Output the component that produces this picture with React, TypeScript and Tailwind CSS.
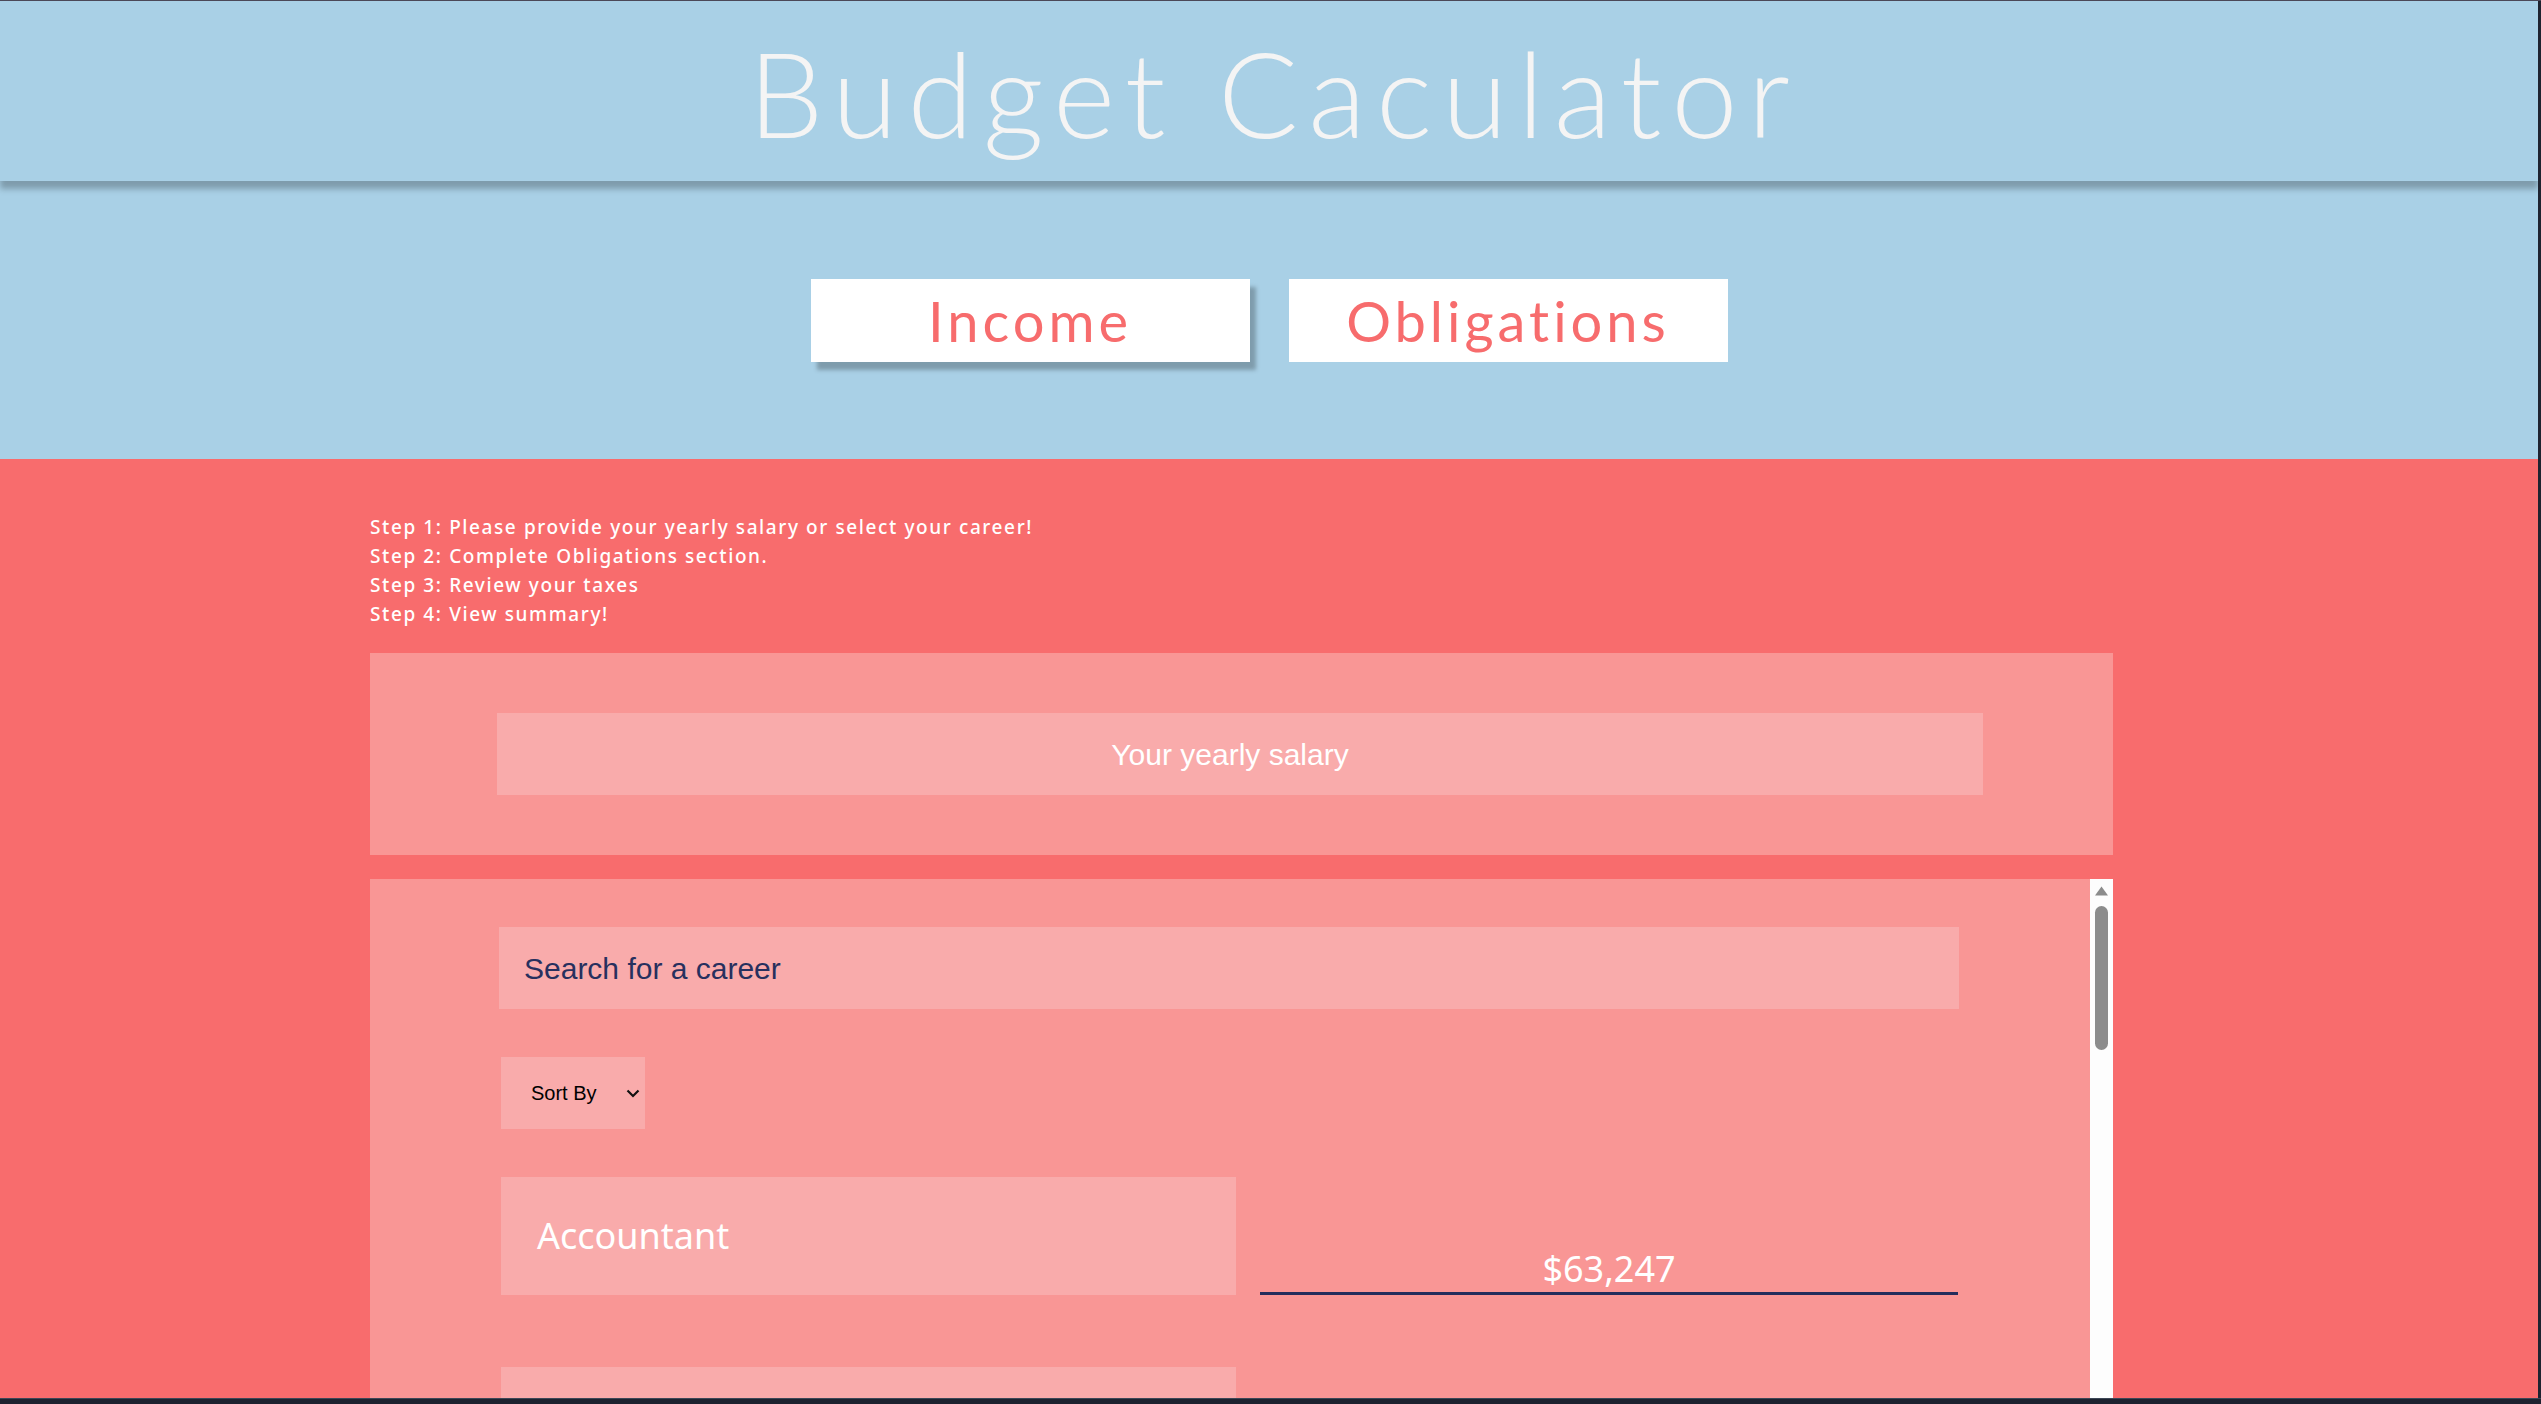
import React from 'react';

const careers = [
  { name: 'Accountant', salary: '$63,247' },
  { name: 'Actor', salary: '$39,140' },
  { name: 'Actuary', salary: '$102,880' },
];

const steps = [
  'Step 1: Please provide your yearly salary or select your career!',
  'Step 2: Complete Obligations section.',
  'Step 3: Review your taxes',
  'Step 4: View summary!',
];

const App: React.FC = () => {
  return (
    <div className="w-[2541px] h-[1404px] overflow-hidden flex flex-col bg-[#1e2330]">
      <div className="h-px shrink-0 bg-[#4b4858]" />
      <div className="flex flex-1 min-h-0">
        <main className="flex-1 min-w-0 overflow-hidden bg-[#f86c6d]">
          <header className="relative z-10 h-[180px] flex items-center justify-center bg-[#a9d0e6] shadow-[0_8px_6px_rgba(0,0,0,0.25)]">
            <h1 className="font-['Lato',sans-serif] font-light text-[119px] leading-none text-[#f4f4f4] tracking-[10px] pl-[10px] pt-[2px]">
              Budget Caculator
            </h1>
          </header>

          <section className="h-[278px] bg-[#a9d0e6] flex justify-center items-start gap-[39px] pt-[98px]">
            <button className="w-[439px] h-[83px] shrink-0 bg-white flex items-center justify-center font-['Lato',sans-serif] text-[56px] tracking-[4px] text-[#f76c6d] shadow-[6px_8px_4px_rgba(0,0,0,0.25)]">
              Income
            </button>
            <button className="w-[439px] h-[83px] shrink-0 bg-white flex items-center justify-center font-['Lato',sans-serif] text-[56px] tracking-[4px] text-[#f76c6d]">
              Obligations
            </button>
          </section>

          <section className="pl-[370px] pt-[54px]">
            <div className="font-['Noto_Sans',sans-serif] font-medium text-[19px] leading-[29px] text-white tracking-[1.6px]">
              {steps.map((s) => (
                <div key={s}>{s}</div>
              ))}
            </div>

            <div className="mt-[24px] w-[1743px] h-[202px] bg-[#f99695] flex items-center pl-[127px]">
              <div className="w-[1486px] h-[82px] bg-[#f9abab] flex items-center justify-center pr-[20px] font-['Liberation_Sans',Arial,sans-serif] text-[30px] text-white">
                Your yearly salary
              </div>
            </div>

            <div className="mt-[24px] w-[1743px] h-[560px] bg-[#f99695] flex">
              <div className="flex-1 pl-[129px] pt-[48px]">
                <div className="w-[1460px] h-[82px] bg-[#f9abab] flex items-center pl-[25px] font-['Liberation_Sans',Arial,sans-serif] text-[30px] text-[#28305e]">
                  Search for a career
                </div>

                <div className="mt-[48px] ml-[2px] w-[144px] h-[72px] bg-[#f9abab] flex items-center pl-[30px] pr-[5px] font-['Liberation_Sans',Arial,sans-serif] text-[20px] text-black">
                  <span>Sort By</span>
                  <svg className="ml-auto" width="14" height="9" viewBox="0 0 14 9" fill="none">
                    <path d="M1.5 1.5 L7 7 L12.5 1.5" stroke="#111" strokeWidth="2.2" />
                  </svg>
                </div>

                <div className="mt-[48px] ml-[2px] flex flex-col gap-[72px]">
                  {careers.map((c) => (
                    <div key={c.name} className="flex gap-[24px] shrink-0">
                      <div className="w-[735px] h-[118px] bg-[#f9abab] flex items-center pl-[36px] font-['Noto_Sans',sans-serif] text-[36px] text-white">
                        {c.name}
                      </div>
                      <div className="w-[698px] flex items-end justify-center border-b-[3px] border-[#252d5c] pb-[5px] font-['Noto_Sans',sans-serif] text-[36px] leading-none text-white">
                        {c.salary}
                      </div>
                    </div>
                  ))}
                </div>
              </div>

              <div className="w-[23px] bg-[#fdfdfd] flex flex-col items-center pt-[7px]">
                <svg width="15" height="10" viewBox="0 0 15 10">
                  <path d="M7.5 0.5 L14 9.5 L1 9.5 Z" fill="#8c8c8c" />
                </svg>
                <div className="mt-[10px] w-[13px] h-[144px] rounded-full bg-[#8c8c8c]" />
              </div>
            </div>
          </section>
        </main>
        <div className="w-[3px] bg-[#1e2330]" />
      </div>
      <div className="h-[6px] shrink-0 border-t border-[#3d4756] bg-[#1d2230]" />
    </div>
  );
};

export default App;
